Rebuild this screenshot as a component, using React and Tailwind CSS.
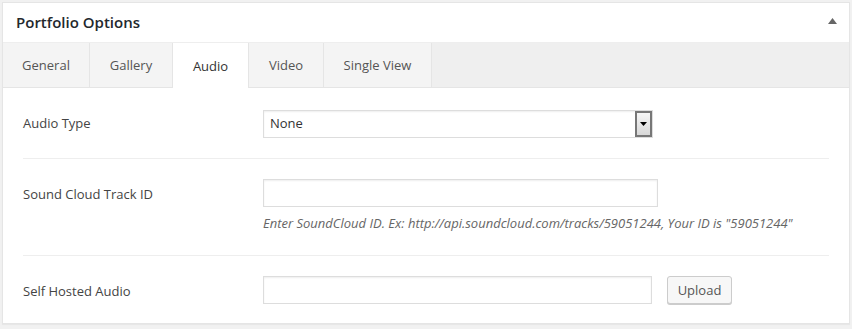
import React from "react";

const tabs = [
  { name: "General", w: "w-[87px]" },
  { name: "Gallery", w: "w-[83px]" },
  { name: "Audio", w: "w-[76px]", active: true },
  { name: "Video", w: "w-[75px]" },
  { name: "Single View", w: "w-[108px]" },
];

const App = () => {
  return (
    <div className="w-[852px] h-[329px] bg-[#f1f1f1] pt-[2px] pl-[2px] font-['Open_Sans',sans-serif] text-[13px] text-[#444]">
      <div className="w-[848px] h-[322px] bg-white border border-[#e5e5e5] shadow-[0_1px_1px_rgba(0,0,0,0.04)] flex flex-col">
        {/* header */}
        <div className="h-[40px] flex items-center justify-between pl-[13px] pr-[12px] border-b border-[#eeeeee]">
          <h2 className="text-[15px] font-semibold text-[#23282d] leading-none">Portfolio Options</h2>
          <svg width="9" height="6" viewBox="0 0 9 6" className="mb-[4px]">
            <path d="M4.5 0L9 6H0z" fill="#666" />
          </svg>
        </div>

        {/* tabs */}
        <div className="h-[45px] flex bg-[#efefef] border-b border-[#e5e5e5]">
          {tabs.map((t) => (
            <div
              key={t.name}
              className={
                t.active
                  ? `${t.w} h-[45px] pt-[2px] flex items-center justify-center bg-white border-r border-[#e5e5e5] text-[#333]`
                  : `${t.w} h-[44px] pt-[2px] flex items-center justify-center bg-[#f4f4f4] border-r border-[#e5e5e5] text-[#555]`
              }
            >
              {t.name}
            </div>
          ))}
        </div>

        {/* rows */}
        <div className="px-[20px]">
          <div className="flex items-center h-[71px] pt-[1px] border-b border-[#eeeeee]">
            <div className="w-[240px] pt-[1px] text-[#444]">Audio Type</div>
            <div className="w-[390px] h-[28px] border border-[#dddddd] shadow-[inset_0_1px_2px_rgba(0,0,0,0.07)] flex items-center justify-between pl-[6px]">
              <span className="text-[#333] pt-[1px]">None</span>
              <div className="w-[17px] h-[26px] border-2 border-[#777] bg-gradient-to-b from-[#f6f6f6] to-[#d8d8d8] flex items-center justify-center">
                <svg width="7" height="4" viewBox="0 0 7 4">
                  <path d="M0 0h7L3.5 4z" fill="#000" />
                </svg>
              </div>
            </div>
          </div>

          <div className="flex h-[97px] pt-[20px] border-b border-[#eeeeee]">
            <div className="w-[240px] h-[28px] pt-[3px] flex items-center text-[#444]">Sound Cloud Track ID</div>
            <div className="flex flex-col">
              <div className="w-[395px] h-[28px] border border-[#dddddd] shadow-[inset_0_1px_2px_rgba(0,0,0,0.07)]"></div>
              <p className="mt-[7px] italic text-[#666] text-[13px] leading-[18px]">
                Enter SoundCloud ID. Ex: http://api.soundcloud.com/tracks/59051244, Your ID is "59051244"
              </p>
            </div>
          </div>

          <div className="flex items-center pt-[20px]">
            <div className="w-[240px] pt-[3px] text-[#444]">Self Hosted Audio</div>
            <div className="w-[389px] h-[28px] border border-[#dddddd] shadow-[inset_0_1px_2px_rgba(0,0,0,0.07)]"></div>
            <button className="ml-[15px] w-[65px] h-[28px] pt-[2px] border border-[#cccccc] rounded-[3px] bg-[#f7f7f7] shadow-[0_1px_0_#ccc] text-[#555] text-[13px]">
              Upload
            </button>
          </div>
        </div>
      </div>
    </div>
  );
};

export default App;
